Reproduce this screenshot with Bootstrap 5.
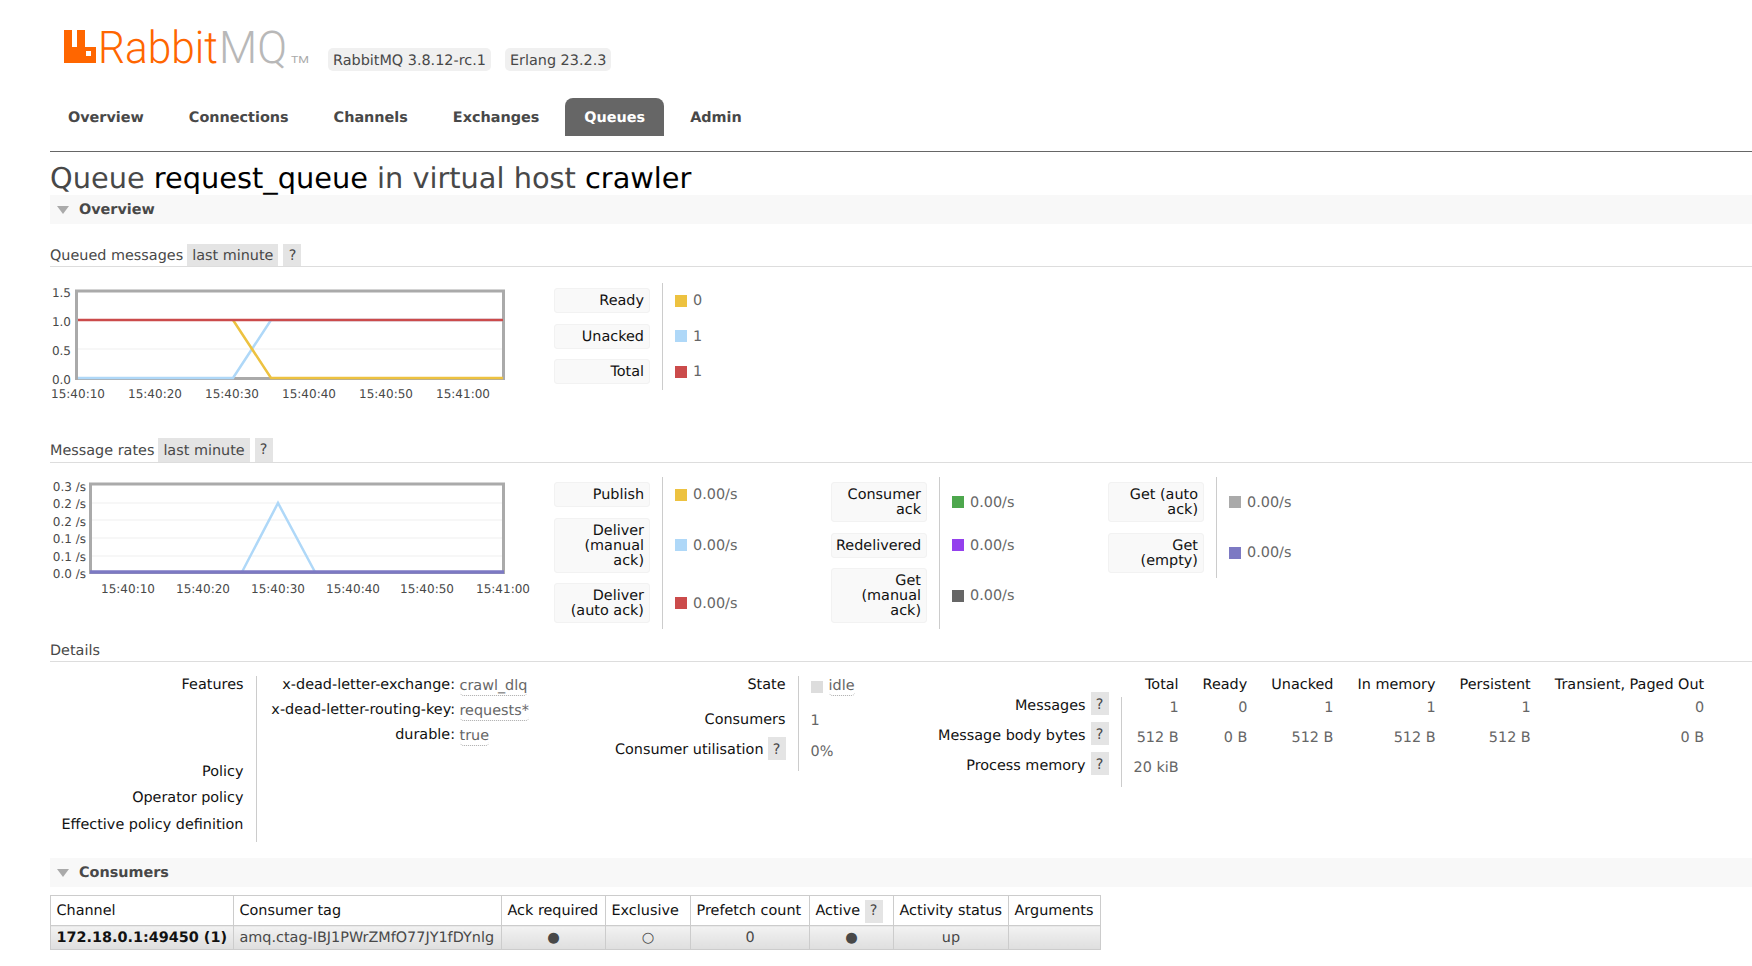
<!DOCTYPE html>
<html>
<head>
<title>RabbitMQ Management</title>
<link href="https://cdn.jsdelivr.net/npm/bootstrap@5.3.2/dist/css/bootstrap.min.css" rel="stylesheet" />
<script src="https://cdn.jsdelivr.net/npm/bootstrap@5.3.2/dist/js/bootstrap.bundle.min.js"></script>
<style>
  body{ font-family:"DejaVu Sans",Verdana,sans-serif; font-size:14.4px; line-height:17px; color:#484848; background:#fff; overflow:hidden; text-rendering:geometricPrecision; }
  #hdr{ padding:25px 0 0 64px; height:71px; }
  #hdr svg{ display:block; overflow:visible; }
  .ver-tag{ background:#f0f0f0; border-radius:5px; height:23px; line-height:27px; padding:0 5px; margin-right:14px; }
  #menu{ margin:27px 0 0 49px; gap:7px; }
  #menu .nav-link{ height:38px; line-height:40px; padding:0 19px; font-weight:700; color:#484848; font-size:14.4px; border-radius:8px 8px 0 0; }
  #menu .nav-link.active{ background:#666; color:#fff; }
  #rule{ margin:15px 0 0 50px; border-top:1px solid #666; }
  #ttl{ margin:0 0 0 50px; height:43px; font-size:28.8px; line-height:52px; font-weight:400; color:#484848; white-space:nowrap; }
  #ttl b{ font-weight:400; color:#000; }
  .sect-bar{ margin-left:50px; height:29px; background:#f8f8f8; font-weight:700; padding:2px 0 0 7px; }
  .tri{ width:0; height:0; border-left:6px solid transparent; border-right:6px solid transparent; border-top:8px solid #aaa; margin:-2px 10px 0 0; }
  .sub-head{ margin-left:50px; height:23px; border-bottom:1px solid #ddd; line-height:25px; }
  .mt-head{ margin-top:20px; }
  .head-tall{ height:25px; line-height:26px; }
  .rng{ background:#e4e4e4; height:22px; padding:0 5px; margin-left:4px; }
  .hlp{ display:inline-block; background:#e4e4e4; width:18px; height:23px; line-height:26px; text-align:center; color:#484848; }
  .sub-head .hlp{ margin-left:5px; height:22px; line-height:25px; }
  .head-tall .rng,.head-tall .hlp{ height:24px; }
  .chart-row{ margin-left:50px; }
  .chart-a{ padding-top:16px; height:171px; }
  .chart-b{ padding-top:14px; height:176px; }
  .chart-row svg{ display:block; flex:none; overflow:visible; }
  .chart-row svg text{ font-family:"DejaVu Sans",sans-serif; font-size:12px; fill:#484848; }
  .lg-col{ width:277px; flex:none; }
  .lg-row{ display:flex; }
  .lg-k{ width:108px; flex:none; padding:5px 12px 5.5px 0; }
  .lg-k span{ display:block; background:#f9f9f9; border:1px solid #f2f2f2; border-radius:3px; padding:5px 5px 3px 4px; line-height:15px; text-align:right; color:#111; }
  .lg-v{ border-left:1px solid #ccc; padding:2px 0 0 12px; color:#666; }
  .swatch{ width:12px; height:12px; margin:-2px 6px 0 0; flex:none; }
  .sw-yellow{ background:#edc240; } .sw-blue{ background:#afd8f8; } .sw-red{ background:#cb4b4b; }
  .sw-green{ background:#4da74d; } .sw-purple{ background:#9440ed; } .sw-dark{ background:#666; }
  .sw-gray{ background:#aaa; } .sw-indigo{ background:#7c79c3; }
  .swatch-idle{ background:#ddd; margin-top:4px; }
  .det-wrap{ margin-left:50px; padding-top:14px; height:196px; }
  .det-a{ width:500px; }
  .det-b{ width:350px; }
  .det-tbl{ border-collapse:collapse; }
  .det-tbl th{ font-weight:400; color:#111; text-align:right; vertical-align:top; padding:1px 12px 0 0; white-space:nowrap; }
  .det-tbl td{ vertical-align:top; border-left:1px solid #ccc; padding:1px 0 0 12px; color:#666; white-space:nowrap; }
  .h-feat{ width:206px; height:81px; }
  .det-tbl th.h-pol{ height:26px; padding-top:7px; }
  .det-tbl th.h-op{ height:27px; padding-top:7px; }
  .det-tbl th.h-last{ height:32px; padding-top:7px; }
  .h-state{ width:248px; height:35px; }
  .h-cons{ height:26px; }
  .det-tbl td.v-cons{ padding-top:2px; }
  .det-tbl th.h-util{ height:34px; padding-top:0; }
  .det-tbl td.v-util{ padding-top:7px; }
  .arg-k{ color:#111; text-align:right; width:191px; padding-right:4.5px; }
  .arg-row{ display:flex; height:25px; }
  .arg-v{ height:19px; padding-top:1px; border-bottom:1px dotted #aaa; border-radius:0 0 4px 4px; color:#666; }
  #msgs{ border-collapse:collapse; }
  #msgs th{ font-weight:400; color:#111; text-align:right; padding:1px 12px 0; white-space:nowrap; vertical-align:top; }
  #msgs thead th{ height:21px; }
  #msgs tbody th{ height:30px; padding:0 12px 0 0; }
  #msgs td{ color:#666; text-align:right; padding:3px 12px 0; white-space:nowrap; vertical-align:top; }
  #msgs td.first{ border-left:1px solid #ccc; }
  #msgs .rlab{ display:flex; justify-content:flex-end; align-items:flex-start; gap:5px; margin-top:-5px; }
  .rtxt{ padding-top:6px; }
  .h-blank{ width:221px; }
  #cons{ margin:8px 0 0 50px; width:1050px; table-layout:fixed; border-collapse:collapse; }
  #cons th,#cons td{ border:1px solid #ccc; padding:2px 5.5px 0; white-space:nowrap; overflow:hidden; }
  #cons th{ font-weight:400; color:#111; height:30px; }
  #cons th .hlp{ line-height:23px; vertical-align:middle; }
  #cons td{ height:24px; padding-top:1px; background:linear-gradient(#f2f2f2,#dedede); text-align:center; color:#484848; }
  #cons td.lft{ text-align:left; }
  #cons td b{ color:#111; }
  .c1{ width:183px; } .c2{ width:268px; } .c3{ width:104px; } .c4{ width:85px; }
  .c5{ width:119px; } .c6{ width:84px; } .c7{ width:115px; } .c8{ width:92px; }
</style>
</head>
<body>
  <div id="hdr" class="d-flex align-items-end">
    <svg width="264" height="46" viewBox="64 25 264 46">
      <path fill="#f60" fill-rule="evenodd" d="M64 30h8v17h5v-17h8v17h11v16h-32zM86 51v5h5v-5z"/>
      <text x="98" y="63" font-family="Roboto,sans-serif" font-weight="300" font-size="45" fill="#f60" textLength="120" lengthAdjust="spacingAndGlyphs">Rabbit</text>
      <text x="219" y="63" font-family="Roboto,sans-serif" font-weight="300" font-size="45" fill="#b8b8b8" textLength="68" lengthAdjust="spacingAndGlyphs">MQ</text>
      <text x="291" y="63" font-family="Roboto,sans-serif" font-size="10" fill="#aaa" textLength="18" lengthAdjust="spacingAndGlyphs">TM</text>
    </svg>
    <span class="ver-tag">RabbitMQ 3.8.12-rc.1</span>
    <span class="ver-tag">Erlang 23.2.3</span>
  </div>

  <ul id="menu" class="nav">
    <li class="nav-item"><a class="nav-link" href="#">Overview</a></li>
    <li class="nav-item"><a class="nav-link" href="#">Connections</a></li>
    <li class="nav-item"><a class="nav-link" href="#">Channels</a></li>
    <li class="nav-item"><a class="nav-link" href="#">Exchanges</a></li>
    <li class="nav-item"><a class="nav-link active" href="#">Queues</a></li>
    <li class="nav-item"><a class="nav-link" href="#">Admin</a></li>
  </ul>
  <div id="rule"></div>

  <h1 id="ttl">Queue <b>request_queue</b> in virtual host <b>crawler</b></h1>

  <div class="sect-bar d-flex align-items-center"><span class="tri"></span>Overview</div>

  <div class="sub-head d-flex align-items-start mt-head"><span>Queued messages</span><span class="rng">last minute</span><span class="hlp">?</span></div>
  <div class="chart-row chart-a d-flex">
    <svg width="504" height="120" viewBox="50 283 504 120">
      <text x="71" y="297" text-anchor="end">1.5</text>
      <text x="71" y="326" text-anchor="end">1.0</text>
      <text x="71" y="355" text-anchor="end">0.5</text>
      <text x="71" y="384" text-anchor="end">0.0</text>
      <rect x="76.5" y="291" width="427" height="87.5" fill="none" stroke="#aaa" stroke-width="3"/>
      <line x1="78" x2="502" y1="349" y2="349" stroke="#f4f4f4" stroke-width="1.5"/>
      <polyline points="78,378 233,378 271,320 503,320" fill="none" stroke="#afd8f8" stroke-width="2.5"/>
      <polyline points="233,320 271,378 503,378" fill="none" stroke="#edc240" stroke-width="2.5"/>
      <line x1="78" x2="503" y1="320" y2="320" stroke="#cb4b4b" stroke-width="2.5"/>
      <text x="78" y="398" text-anchor="middle">15:40:10</text>
      <text x="155" y="398" text-anchor="middle">15:40:20</text>
      <text x="232" y="398" text-anchor="middle">15:40:30</text>
      <text x="309" y="398" text-anchor="middle">15:40:40</text>
      <text x="386" y="398" text-anchor="middle">15:40:50</text>
      <text x="463" y="398" text-anchor="middle">15:41:00</text>
    </svg>
    <div class="lg-col">
      <div class="lg-row"><div class="lg-k"><span>Ready</span></div><div class="lg-v d-flex align-items-center"><i class="swatch sw-yellow"></i>0</div></div>
      <div class="lg-row"><div class="lg-k"><span>Unacked</span></div><div class="lg-v d-flex align-items-center"><i class="swatch sw-blue"></i>1</div></div>
      <div class="lg-row"><div class="lg-k"><span>Total</span></div><div class="lg-v d-flex align-items-center"><i class="swatch sw-red"></i>1</div></div>
    </div>
  </div>

  <div class="sub-head head-tall d-flex align-items-start"><span>Message rates</span><span class="rng">last minute</span><span class="hlp">?</span></div>
  <div class="chart-row chart-b d-flex">
    <svg width="504" height="120" viewBox="50 477 504 120">
      <text x="86" y="491" text-anchor="end">0.3 /s</text>
      <text x="86" y="508" text-anchor="end">0.2 /s</text>
      <text x="86" y="526" text-anchor="end">0.2 /s</text>
      <text x="86" y="543" text-anchor="end">0.1 /s</text>
      <text x="86" y="561" text-anchor="end">0.1 /s</text>
      <text x="86" y="578" text-anchor="end">0.0 /s</text>
      <rect x="90.5" y="484" width="413" height="88.5" fill="none" stroke="#aaa" stroke-width="3"/>
      <line x1="92" x2="502" y1="503" y2="503" stroke="#f4f4f4" stroke-width="1.5"/>
      <line x1="92" x2="502" y1="520" y2="520" stroke="#f4f4f4" stroke-width="1.5"/>
      <line x1="92" x2="502" y1="538" y2="538" stroke="#f4f4f4" stroke-width="1.5"/>
      <line x1="92" x2="502" y1="556" y2="556" stroke="#f4f4f4" stroke-width="1.5"/>
      <polyline points="242,572 278,503 315,572" fill="none" stroke="#afd8f8" stroke-width="2.5"/>
      <line x1="90" x2="504" y1="572" y2="572" stroke="#7c79c3" stroke-width="3.5"/>
      <text x="128" y="593" text-anchor="middle">15:40:10</text>
      <text x="203" y="593" text-anchor="middle">15:40:20</text>
      <text x="278" y="593" text-anchor="middle">15:40:30</text>
      <text x="353" y="593" text-anchor="middle">15:40:40</text>
      <text x="427" y="593" text-anchor="middle">15:40:50</text>
      <text x="503" y="593" text-anchor="middle">15:41:00</text>
    </svg>
    <div class="lg-col">
      <div class="lg-row"><div class="lg-k"><span>Publish</span></div><div class="lg-v d-flex align-items-center"><i class="swatch sw-yellow"></i>0.00/s</div></div>
      <div class="lg-row"><div class="lg-k"><span>Deliver (manual ack)</span></div><div class="lg-v d-flex align-items-center"><i class="swatch sw-blue"></i>0.00/s</div></div>
      <div class="lg-row"><div class="lg-k"><span>Deliver (auto ack)</span></div><div class="lg-v d-flex align-items-center"><i class="swatch sw-red"></i>0.00/s</div></div>
    </div>
    <div class="lg-col">
      <div class="lg-row"><div class="lg-k"><span>Consumer ack</span></div><div class="lg-v d-flex align-items-center"><i class="swatch sw-green"></i>0.00/s</div></div>
      <div class="lg-row"><div class="lg-k"><span>Redelivered</span></div><div class="lg-v d-flex align-items-center"><i class="swatch sw-purple"></i>0.00/s</div></div>
      <div class="lg-row"><div class="lg-k"><span>Get (manual ack)</span></div><div class="lg-v d-flex align-items-center"><i class="swatch sw-dark"></i>0.00/s</div></div>
    </div>
    <div class="lg-col">
      <div class="lg-row"><div class="lg-k"><span>Get (auto ack)</span></div><div class="lg-v d-flex align-items-center"><i class="swatch sw-gray"></i>0.00/s</div></div>
      <div class="lg-row"><div class="lg-k"><span>Get (empty)</span></div><div class="lg-v d-flex align-items-center"><i class="swatch sw-indigo"></i>0.00/s</div></div>
    </div>
  </div>

  <div class="sub-head d-flex align-items-start"><span>Details</span></div>
  <div class="det-wrap d-flex">
    <div class="det-a">
      <table class="det-tbl">
        <tr><th class="h-feat">Features</th>
          <td>
            <div class="arg-row"><div class="arg-k">x-dead-letter-exchange:</div><div class="arg-v">crawl_dlq</div></div>
            <div class="arg-row"><div class="arg-k">x-dead-letter-routing-key:</div><div class="arg-v">requests*</div></div>
            <div class="arg-row"><div class="arg-k">durable:</div><div class="arg-v">true</div></div>
          </td></tr>
        <tr><th class="h-pol">Policy</th><td></td></tr>
        <tr><th class="h-op">Operator policy</th><td></td></tr>
        <tr><th class="h-last">Effective policy definition</th><td></td></tr>
      </table>
    </div>
    <div class="det-b">
      <table class="det-tbl">
        <tr><th class="h-state">State</th><td><div class="d-flex"><i class="swatch swatch-idle"></i><span class="arg-v">idle</span></div></td></tr>
        <tr><th class="h-cons">Consumers</th><td class="v-cons">1</td></tr>
        <tr><th class="h-util">Consumer utilisation<span class="hlp ms-1">?</span></th><td class="v-util">0%</td></tr>
      </table>
    </div>
    <div>
      <table id="msgs">
        <thead><tr><th class="h-blank"></th><th>Total</th><th>Ready</th><th>Unacked</th><th>In memory</th><th>Persistent</th><th>Transient, Paged Out</th></tr></thead>
        <tbody>
          <tr><th><div class="rlab"><span class="rtxt">Messages</span><span class="hlp">?</span></div></th><td class="first">1</td><td>0</td><td>1</td><td>1</td><td>1</td><td>0</td></tr>
          <tr><th><div class="rlab"><span class="rtxt">Message body bytes</span><span class="hlp">?</span></div></th><td class="first">512 B</td><td>0 B</td><td>512 B</td><td>512 B</td><td>512 B</td><td>0 B</td></tr>
          <tr><th><div class="rlab"><span class="rtxt">Process memory</span><span class="hlp">?</span></div></th><td class="first">20 kiB</td><td></td><td></td><td></td><td></td><td></td></tr>
        </tbody>
      </table>
    </div>
  </div>

  <div class="sect-bar d-flex align-items-center"><span class="tri"></span>Consumers</div>
  <table id="cons">
    <colgroup><col class="c1"><col class="c2"><col class="c3"><col class="c4"><col class="c5"><col class="c6"><col class="c7"><col class="c8"></colgroup>
    <tr><th>Channel</th><th>Consumer tag</th><th>Ack required</th><th>Exclusive</th><th>Prefetch count</th><th>Active <span class="hlp">?</span></th><th>Activity status</th><th>Arguments</th></tr>
    <tr><td class="lft"><b>172.18.0.1:49450 (1)</b></td><td class="lft">amq.ctag-IBJ1PWrZMfO77JY1fDYnlg</td><td>●</td><td>○</td><td>0</td><td>●</td><td>up</td><td></td></tr>
  </table>
</body>
</html>
